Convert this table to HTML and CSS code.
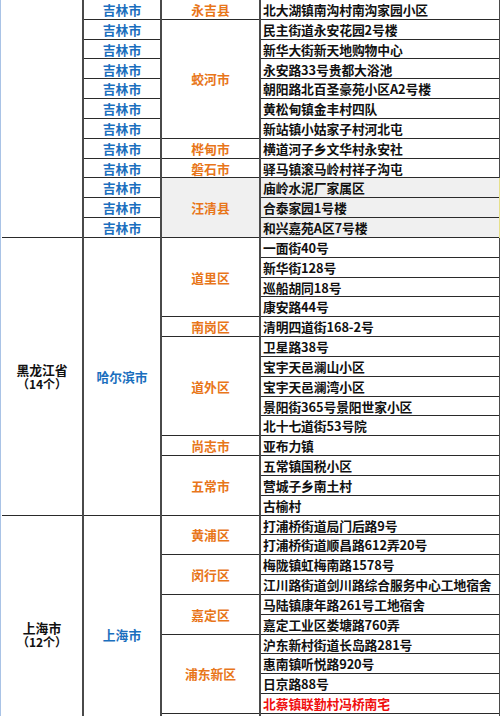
FILE: index.html
```html
<!DOCTYPE html>
<html lang="zh-CN">
<head>
<meta charset="utf-8">
<title>地址列表</title>
<link rel="stylesheet" href="styles.css">
</head>
<body>
<div class="sheet">
<table class="grid">
<colgroup><col class="c1"><col class="c2"><col class="c3"><col class="c4"></colgroup>
<tbody>
<tr><td class="prov blank" rowspan="12"></td><td class="city">吉林市</td><td class="dist">永吉县</td><td class="addr">北大湖镇南沟村南沟家园小区</td></tr>
<tr><td class="city">吉林市</td><td class="dist" rowspan="6">蛟河市</td><td class="addr">民主街道永安花园2号楼</td></tr>
<tr><td class="city">吉林市</td><td class="addr">新华大街新天地购物中心</td></tr>
<tr><td class="city">吉林市</td><td class="addr">永安路33号贵都大浴池</td></tr>
<tr><td class="city">吉林市</td><td class="addr">朝阳路北百圣豪苑小区A2号楼</td></tr>
<tr><td class="city">吉林市</td><td class="addr">黄松甸镇金丰村四队</td></tr>
<tr><td class="city">吉林市</td><td class="addr">新站镇小姑家子村河北屯</td></tr>
<tr><td class="city">吉林市</td><td class="dist">桦甸市</td><td class="addr">横道河子乡文华村永安社</td></tr>
<tr><td class="city">吉林市</td><td class="dist">磐石市</td><td class="addr">驿马镇滚马岭村祥子沟屯</td></tr>
<tr><td class="city">吉林市</td><td class="dist shade" rowspan="3">汪清县</td><td class="addr shade">庙岭水泥厂家属区</td></tr>
<tr><td class="city">吉林市</td><td class="addr shade">合泰家园1号楼</td></tr>
<tr><td class="city">吉林市</td><td class="addr shade">和兴嘉苑A区7号楼</td></tr>

<tr><td class="prov" rowspan="14"><span class="pname">黑龙江省</span><span class="pcount">（14个）</span></td><td class="city" rowspan="14">哈尔滨市</td><td class="dist" rowspan="4">道里区</td><td class="addr">一面街40号</td></tr>
<tr><td class="addr">新华街128号</td></tr>
<tr><td class="addr">巡船胡同18号</td></tr>
<tr><td class="addr">康安路44号</td></tr>
<tr><td class="dist">南岗区</td><td class="addr">清明四道街168-2号</td></tr>
<tr><td class="dist" rowspan="5">道外区</td><td class="addr">卫星路38号</td></tr>
<tr><td class="addr">宝宇天邑澜山小区</td></tr>
<tr><td class="addr">宝宇天邑澜湾小区</td></tr>
<tr><td class="addr">景阳街365号景阳世家小区</td></tr>
<tr><td class="addr">北十七道街53号院</td></tr>
<tr><td class="dist">尚志市</td><td class="addr">亚布力镇</td></tr>
<tr><td class="dist" rowspan="3">五常市</td><td class="addr">五常镇国税小区</td></tr>
<tr><td class="addr">营城子乡南土村</td></tr>
<tr><td class="addr">古榆村</td></tr>

<tr><td class="prov" rowspan="12"><span class="pname">上海市</span><span class="pcount">（12个）</span></td><td class="city" rowspan="12">上海市</td><td class="dist" rowspan="2">黄浦区</td><td class="addr">打浦桥街道局门后路9号</td></tr>
<tr><td class="addr">打浦桥街道顺昌路612弄20号</td></tr>
<tr><td class="dist" rowspan="2">闵行区</td><td class="addr">梅陇镇虹梅南路1578号</td></tr>
<tr><td class="addr">江川路街道剑川路综合服务中心工地宿舍</td></tr>
<tr><td class="dist" rowspan="2">嘉定区</td><td class="addr">马陆镇康年路261号工地宿舍</td></tr>
<tr><td class="addr">嘉定工业区娄塘路760弄</td></tr>
<tr><td class="dist" rowspan="4">浦东新区</td><td class="addr">沪东新村街道长岛路281号</td></tr>
<tr><td class="addr">惠南镇听悦路920号</td></tr>
<tr><td class="addr">日京路88号</td></tr>
<tr><td class="addr red">北蔡镇联勤村冯桥南宅</td></tr>
<tr><td class="dist"></td><td class="addr"></td></tr>
<tr><td class="dist"></td><td class="addr"></td></tr>
</tbody>
</table>
</div>
</body>
</html>
```
FILE: styles.css
```css
html, body {
  margin: 0;
  padding: 0;
  background: #ffffff;
}
body {
  width: 500px;
  height: 716px;
  overflow: hidden;
}
.sheet {
  border-left: 1px solid #a9c3e6;
  padding-left: 1px;
  margin-top: -1px;
}
.grid {
  width: 498px;
  table-layout: fixed;
  border-collapse: collapse;
  font-family: "Noto Sans CJK SC", "Liberation Sans", sans-serif;
  font-weight: 700;
  font-size: 12.8px;
  line-height: 1;
}
.c1 { width: 81px; }
.c2 { width: 78px; }
.c3 { width: 99px; }
.c4 { width: 240px; }
.grid tr {
  height: 19.83px;
}
.grid td {
  padding: 2px 0 0 0;
  border-top: 1px solid #2a2a2a;
  border-bottom: 1px solid #2a2a2a;
  border-left: 2px solid #4a4a4a;
  border-right: 2px solid #4a4a4a;
  text-align: center;
  vertical-align: middle;
  white-space: nowrap;
  overflow: hidden;
}
.grid td.prov {
  border-left: none;
  color: #111111;
}
.pname,
.pcount {
  display: block;
  line-height: 14px;
}
.pcount {
  font-size: 12px;
}
.grid td.city {
  color: #1b6fbe;
}
.grid td.dist {
  color: #e8761a;
}
.grid td.addr {
  text-align: left;
  padding-left: 2px;
  color: #111111;
  letter-spacing: -0.1px;
}
.grid td.shade {
  background: #f0f0f0;
}
.grid td.addr.shade {
  border-right: 2px solid #e6e08a;
}
.grid td.red {
  color: #f01010;
}
```
